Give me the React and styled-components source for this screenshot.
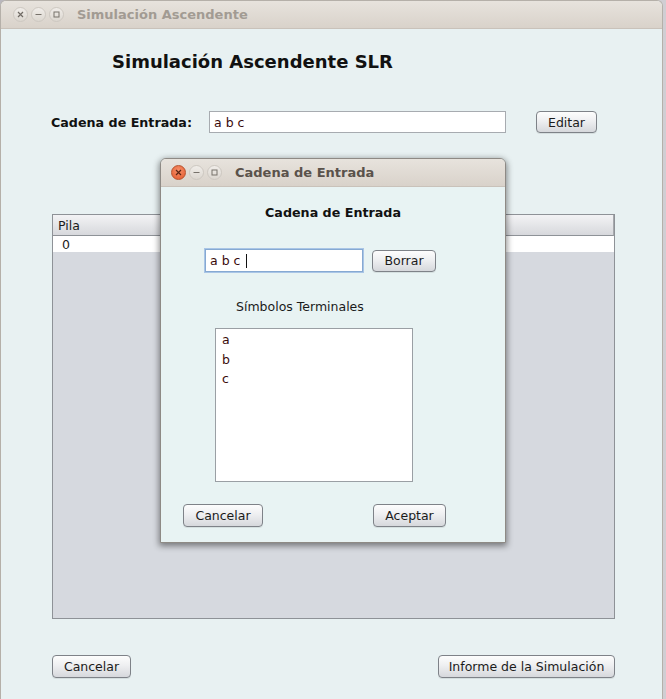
import React from "react";
import styled, { createGlobalStyle } from "styled-components";

const GlobalStyle = createGlobalStyle`
  html, body {
    margin: 0;
    padding: 0;
    background: #b9b7bd;
    overflow: hidden;
  }
  body {
    font-family: "DejaVu Sans", "Liberation Sans", sans-serif;
  }
`;

const Desktop = styled.div`
  width: 666px;
  height: 699px;
  position: relative;
  background: linear-gradient(90deg, #b9b7bd 0, #d0ced3 100%);
`;

const Window = styled.div`
  width: 663px;
  height: 699px;
  box-sizing: border-box;
  border: 1px solid #b5b0a9;
  border-bottom: none;
  border-radius: 6px 6px 0 0;
  display: flex;
  flex-direction: column;
  overflow: hidden;
  background: #e8f1f2;
`;

const TitleBar = styled.div`
  height: ${(p) => p.$h || 27}px;
  flex-shrink: 0;
  display: flex;
  align-items: center;
  padding-left: ${(p) => p.$pad || 11}px;
  background: linear-gradient(#e7e3dd, #d9d2ca);
  border-bottom: 1px solid #c9c2ba;
`;

const Controls = styled.div`
  display: flex;
  gap: 3px;
  margin-right: ${(p) => p.$gap || 14}px;
`;

const Circle = styled.div`
  width: 15px;
  height: 15px;
  border-radius: 50%;
  box-sizing: border-box;
  display: flex;
  align-items: center;
  justify-content: center;
  border: 1px solid ${(p) => (p.$close ? "#b8512c" : "#cdc8c1")};
  background: ${(p) =>
    p.$close
      ? "radial-gradient(circle at 50% 35%, #f7906a, #e2582c)"
      : "linear-gradient(#f0ede9, #dcd7d0)"};
`;

const Title = styled.span`
  font-family: "DejaVu Sans", sans-serif;
  font-weight: bold;
  font-size: 13px;
  color: ${(p) => (p.$active ? "#5a524b" : "#a29b93")};
`;

const Content = styled.div`
  flex: 1;
  display: flex;
  flex-direction: column;
  padding-left: 51px;
`;

const Heading = styled.h1`
  margin: 22px 0 0 60px;
  font-size: 18px;
  line-height: 22px;
  font-weight: bold;
  color: #111;
`;

const InputRow = styled.div`
  display: flex;
  align-items: center;
  margin-top: 38px;
  height: 22px;
`;

const Label = styled.span`
  font-size: 12.7px;
  font-weight: bold;
  color: #111;
  width: 158px;
  margin-left: -1px;
`;

const Field = styled.div`
  width: ${(p) => p.$w}px;
  height: ${(p) => p.$h || 22}px;
  box-sizing: border-box;
  background: #fff;
  border: 1px solid ${(p) => (p.$focus ? "#86a9d2" : "#a7abb0")};
  box-shadow: ${(p) => (p.$focus ? "0 0 0 1px #a9c5e6" : "none")};
  display: flex;
  align-items: center;
  padding-left: 4px;
  font-size: 12.5px;
  color: #3a0c0c;
`;

const Caret = styled.span`
  display: inline-block;
  width: 1px;
  height: 14px;
  background: #111;
  margin-left: 6px;
`;

const Button = styled.button`
  width: ${(p) => p.$w}px;
  height: ${(p) => p.$h || 22}px;
  margin-left: ${(p) => p.$ml || 0}px;
  box-sizing: border-box;
  border: 1px solid #7e8288;
  border-radius: 4px;
  background: linear-gradient(#fdfdfd, #eeeff1 45%, #d6d8dc);
  box-shadow: 0 1px 0 rgba(0, 0, 0, 0.08);
  font-family: "DejaVu Sans", sans-serif;
  font-size: 12.5px;
  color: #1b1b1b;
  padding: 0;
  display: flex;
  align-items: center;
  justify-content: center;
  flex-shrink: 0;
`;

const Table = styled.div`
  margin-top: 81px;
  width: 563px;
  height: 405px;
  box-sizing: border-box;
  border: 1px solid #8e9297;
  background: #d6d9df;
  display: flex;
  flex-direction: column;
`;

const HeaderCell = styled.div`
  height: 21px;
  box-sizing: border-box;
  border-bottom: 1px solid #8e9297;
  border-right: 1px solid #a6a9ad;
  background: linear-gradient(#f3f3f5, #e2e3e6 60%, #d7d8dc);
  font-size: 12.5px;
  color: #1a1a1a;
  padding-left: 5px;
  display: flex;
  align-items: center;
`;

const Row = styled.div`
  height: 16px;
  background: #fff;
  font-size: 12.5px;
  color: #1a1a1a;
  padding-left: 9px;
  display: flex;
  align-items: center;
`;

const Footer = styled.div`
  margin-top: 36px;
  width: 563px;
  display: flex;
  justify-content: space-between;
`;

const Dialog = styled.div`
  position: absolute;
  left: 160px;
  top: 158px;
  width: 346px;
  height: 385px;
  box-sizing: border-box;
  border: 1px solid #8e8a85;
  border-radius: 6px 6px 0 0;
  overflow: hidden;
  display: flex;
  flex-direction: column;
  box-shadow: 0 2px 6px 1px rgba(0, 0, 0, 0.45);
  background: #e8f3f3;
`;

const DialogBody = styled.div`
  flex: 1;
  display: flex;
  flex-direction: column;
  padding-left: 44px;
`;

const DialogHeading = styled.div`
  margin: 18px 0 0 -44px;
  text-align: center;
  font-size: 12.7px;
  line-height: 16px;
  font-weight: bold;
  color: #111;
`;

const DialogRow = styled.div`
  display: flex;
  align-items: center;
  margin-top: 28px;
`;

const Caption = styled.div`
  margin: 27px 0 0 31px;
  font-size: 12.5px;
  line-height: 16px;
  color: #1a1a1a;
`;

const List = styled.div`
  margin: 13px 0 0 10px;
  width: 198px;
  height: 154px;
  box-sizing: border-box;
  border: 1px solid #9a9fa4;
  background: #fff;
  padding: 1px 0 0 6px;
`;

const ListItem = styled.div`
  height: 19.5px;
  line-height: 19px;
  font-size: 12.5px;
  color: #3a0c0c;
`;

const DialogFooter = styled.div`
  display: flex;
  margin: 22px 0 0 -22px;
`;

const Glyph = ({ kind, color }) => (
  <svg width="9" height="9" viewBox="0 0 9 9">
    {kind === "x" && (
      <path d="M2 2 L7 7 M7 2 L2 7" stroke={color} strokeWidth="1.2" />
    )}
    {kind === "min" && <path d="M1.5 4.5 H7.5" stroke={color} strokeWidth="1.1" />}
    {kind === "max" && (
      <rect x="2" y="2" width="5" height="5" fill="none" stroke={color} strokeWidth="1" />
    )}
  </svg>
);

const WindowControls = ({ active, gap }) => (
  <Controls $gap={gap}>
    <Circle $close={active}>
      <Glyph kind="x" color={active ? "#5b2414" : "#6f6a64"} />
    </Circle>
    <Circle>
      <Glyph kind="min" color="#77726b" />
    </Circle>
    <Circle>
      <Glyph kind="max" color="#77726b" />
    </Circle>
  </Controls>
);

const App = () => {
  const terminals = ["a", "b", "c"];
  return (
    <>
      <GlobalStyle />
      <Desktop>
        <Window>
          <TitleBar $pad={12}>
            <WindowControls gap={13} />
            <Title>Simulación Ascendente</Title>
          </TitleBar>
          <Content>
            <Heading>Simulación Ascendente SLR</Heading>
            <InputRow>
              <Label>Cadena de Entrada:</Label>
              <Field $w={297}>a b c</Field>
              <Button $w={61} $ml={30}>Editar</Button>
            </InputRow>
            <Table>
              <HeaderCell>Pila</HeaderCell>
              <Row>0</Row>
            </Table>
            <Footer>
              <Button $w={79} $h={23}>Cancelar</Button>
              <Button $w={177} $h={23}>Informe de la Simulación</Button>
            </Footer>
          </Content>
        </Window>
        <Dialog>
          <TitleBar $h={27} $pad={10}>
            <WindowControls active gap={13} />
            <Title $active>Cadena de Entrada</Title>
          </TitleBar>
          <DialogBody>
            <DialogHeading>Cadena de Entrada</DialogHeading>
            <DialogRow>
              <Field $w={158} $h={23} $focus>
                a b c<Caret />
              </Field>
              <Button $w={64} $ml={9}>Borrar</Button>
            </DialogRow>
            <Caption>Símbolos Terminales</Caption>
            <List>
              {terminals.map((t) => (
                <ListItem key={t}>{t}</ListItem>
              ))}
            </List>
            <DialogFooter>
              <Button $w={80} $h={23}>Cancelar</Button>
              <Button $w={73} $h={23} $ml={110}>Aceptar</Button>
            </DialogFooter>
          </DialogBody>
        </Dialog>
      </Desktop>
    </>
  );
};

export default App;
